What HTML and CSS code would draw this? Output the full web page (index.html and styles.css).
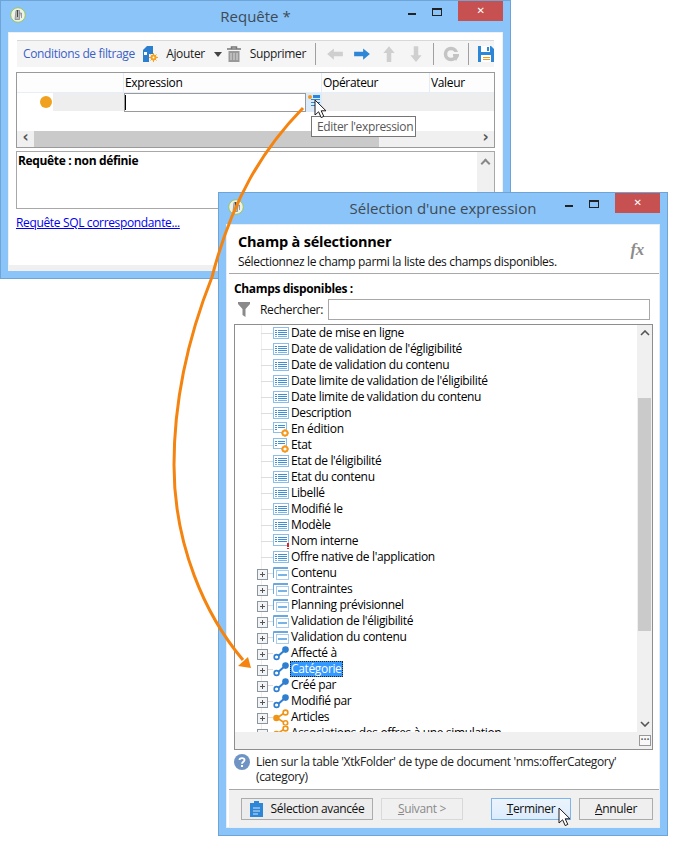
FILE: index.html
```html
<!DOCTYPE html>
<html lang="fr">
<head>
<meta charset="utf-8">
<title>Requête</title>
<link rel="stylesheet" href="styles.css">
</head>
<body>
<svg class="defs" width="0" height="0">
  <symbol id="field" viewBox="0 0 16 16"><rect x="0.5" y="2.5" width="15" height="11" fill="#fff" stroke="#8cbfe8"/><rect x="2" y="5" width="2" height="1" fill="#3f8fd8"/><rect x="5" y="5" width="9" height="1" fill="#3f8fd8"/><rect x="2" y="7" width="2" height="1" fill="#3f8fd8"/><rect x="5" y="7" width="9" height="1" fill="#3f8fd8"/><rect x="2" y="9" width="2" height="1" fill="#3f8fd8"/><rect x="5" y="9" width="9" height="1" fill="#3f8fd8"/><rect x="2" y="11" width="2" height="1" fill="#7ab4e6"/><rect x="5" y="11" width="9" height="1" fill="#7ab4e6"/></symbol>
  <symbol id="calc" viewBox="0 0 16 16"><rect x="0.5" y="1.5" width="13" height="10" fill="#fff" stroke="#8cbfe8"/><rect x="2" y="4" width="2" height="1" fill="#3f8fd8"/><rect x="5" y="4" width="7" height="1" fill="#3f8fd8"/><rect x="2" y="6" width="2" height="1" fill="#3f8fd8"/><rect x="5" y="6" width="7" height="1" fill="#3f8fd8"/><rect x="2" y="8" width="2" height="1" fill="#3f8fd8"/><circle cx="12" cy="12" r="2.6" fill="#fff" stroke="#f39a1e" stroke-width="2"/><path d="M12 8v1M12 15v1M8 12h1M15 12h1" stroke="#f39a1e"/></symbol>
  <symbol id="req" viewBox="0 0 16 16"><rect x="0.5" y="1.5" width="15" height="11" fill="#fff" stroke="#8cbfe8"/><rect x="2" y="4" width="2" height="1" fill="#3f8fd8"/><rect x="5" y="4" width="9" height="1" fill="#3f8fd8"/><rect x="2" y="6" width="2" height="1" fill="#3f8fd8"/><rect x="5" y="6" width="9" height="1" fill="#3f8fd8"/><rect x="2" y="8" width="2" height="1" fill="#3f8fd8"/><rect x="5" y="8" width="9" height="1" fill="#3f8fd8"/><rect x="14" y="10" width="2" height="4" fill="#e0262c"/><rect x="14" y="15" width="2" height="1" fill="#e0262c"/></symbol>
  <symbol id="group" viewBox="0 0 16 16"><path d="M0.5 13V2.5H15" fill="none" stroke="#6aa9e0" stroke-width="1"/><rect x="1" y="2" width="14" height="2" fill="#6aa9e0"/><rect x="3.5" y="5.5" width="12" height="9" fill="#fff" stroke="#a9cdee"/><rect x="5" y="9" width="9" height="2" fill="#7ab4e6"/></symbol>
  <symbol id="link" viewBox="0 0 16 16"><path d="M4 12L12 5" stroke="#2f7fd0" stroke-width="2"/><circle cx="3.6" cy="12" r="2.4" fill="#fff" stroke="#2f7fd0" stroke-width="1.6"/><circle cx="12.5" cy="4.6" r="3.3" fill="#2f7fd0"/></symbol>
  <symbol id="share" viewBox="0 0 16 16"><path d="M4 9L12 3.5M4 9L12 14" stroke="#f09418" stroke-width="1.6"/><circle cx="3.4" cy="9" r="3.2" fill="#f09418"/><circle cx="12.5" cy="3.5" r="2.4" fill="#fff" stroke="#f09418" stroke-width="1.6"/><circle cx="12.5" cy="14" r="2.2" fill="#fff" stroke="#f09418" stroke-width="1.6"/></symbol>
  <symbol id="logo" viewBox="0 0 16 16"><circle cx="8" cy="8" r="7.3" fill="#eef3ea" stroke="#9dc45a" stroke-width="1"/><path d="M6 3.5h3.5v9H5zM9.5 6h2v5" fill="#b9bcbc" stroke="#7c7f80" stroke-width="0.7"/><path d="M7.5 3v7" stroke="#444" stroke-width="1"/></symbol>
  <symbol id="cursor" viewBox="0 0 13 20"><path d="M1 1V16L4.6 12.8L7.2 18.6L9.8 17.4L7.2 11.8H12Z" fill="#fff" stroke="#1c1c1c" stroke-width="1" stroke-linejoin="round"/></symbol>
  <symbol id="arrow" viewBox="0 0 16 16"><path d="M1 8L7 3V6H15V10H7V13Z" fill="currentColor"/></symbol>
</svg>

<section class="win win-query">
  <header class="titlebar">
    <svg class="logo"><use href="#logo"/></svg>
    <h1 class="wintitle">Requête *</h1>
    <div class="winbtns">
      <span class="wb-min"></span><span class="wb-max"></span><span class="wb-close">✕</span>
    </div>
  </header>
  <div class="body body-query">
    <div class="toolbar">
      <span class="tb-title">Conditions de filtrage</span>
      <span class="tb-item tb-add">
        <svg class="i16" viewBox="0 0 16 16"><path d="M1 16V4L5 0H11V8H7V16Z" fill="#2c7fce"/><rect x="2" y="6" width="3" height="3" fill="#fff"/><circle cx="11.5" cy="11.5" r="3" fill="#f7a11e"/><path d="M11.5 7v9M7 11.5h9M8.5 8.5l6 6M14.5 8.5l-6 6" stroke="#f7a11e"/><circle cx="11.5" cy="11.5" r="1" fill="#fff"/></svg>
        Ajouter
      </span>
      <span class="tb-caret"></span>
      <span class="tb-item tb-del">
        <svg class="i16" viewBox="0 0 16 16"><path d="M1 3H15M5.500 3V1H10.500V3" fill="none" stroke="#777" stroke-width="1.500"/><path d="M2.500 5H13.500V16H2.500Z" fill="#999"/><path d="M5 7V14M8 7V14M11 7V14" stroke="#ddd"/></svg>
        Supprimer
      </span>
      <span class="tb-sep tb-sep-a"></span>
      <svg class="i18 off nav-l" viewBox="0 0 16 16"><use href="#arrow"/></svg>
      <svg class="i18 blue nav" viewBox="0 0 16 16"><g transform="rotate(180 8 8)"><use href="#arrow"/></g></svg>
      <svg class="i18 off nav" viewBox="0 0 16 16"><g transform="rotate(90 8 8)"><use href="#arrow"/></g></svg>
      <svg class="i18 off nav" viewBox="0 0 16 16"><g transform="rotate(-90 8 8)"><use href="#arrow"/></g></svg>
      <span class="tb-sep tb-sep-b"></span>
      <svg class="i16 gear" viewBox="0 0 16 16"><circle cx="8" cy="8" r="5.500" fill="none" stroke="#c4c4c4" stroke-width="3.500"/><path d="M10 8h6v2l-3 5-3-5z" fill="#c4c4c4"/><rect x="9" y="6" width="7" height="2" fill="#f5f5f5"/></svg>
      <span class="tb-sep tb-sep-c"></span>
      <svg class="i16 save" viewBox="0 0 16 16"><path d="M0 0H13L16 3V16H0Z" fill="#2e86d6"/><rect x="3" y="0" width="9" height="6" fill="#fff"/><rect x="9" y="1" width="2" height="4" fill="#2e86d6"/><rect x="3" y="9" width="10" height="7" fill="#fff"/><rect x="5" y="11" width="7" height="1" fill="#f39a1e"/><rect x="5" y="13" width="7" height="1" fill="#f39a1e"/></svg>
    </div>

    <div class="grid">
      <div class="grid-head">
        <span class="gh gh-0"></span>
        <span class="gh gh-1">Expression</span>
        <span class="gh gh-2">Opérateur</span>
        <span class="gh gh-3">Valeur</span>
      </div>
      <div class="grid-row">
        <span class="gr-dot"><i class="dot"></i></span>
        <span class="gr-fill"></span>
        <span class="gr-input"><i class="caret"></i></span>
        <span class="gr-btn">
          <svg class="i12" viewBox="0 0 12 12"><circle cx="2" cy="3" r="2" fill="#f39a1e"/><rect x="5" y="1" width="7" height="3" fill="#2e86d6"/><rect x="3" y="5" width="9" height="1" fill="#2e86d6"/><rect x="3" y="8" width="9" height="1" fill="#2e86d6"/><rect x="3" y="11" width="9" height="1" fill="#2e86d6"/></svg>
        </span>
        <span class="gr-rest"></span>
      </div>
      <div class="hscroll">
        <span class="sb-btn">‹</span>
        <span class="sb-thumb"></span>
        <span class="sb-track"></span>
        <span class="sb-btn">›</span>
      </div>
    </div>

    <div class="querybox">
      <strong class="qtext">Requête : non définie</strong>
      <div class="vscroll-small"><span class="sb-up"></span></div>
    </div>
    <a class="sqllink" href="#">Requête SQL correspondante...</a>
  </div>
</section>

<section class="win win-select">
  <header class="titlebar">
    <svg class="logo"><use href="#logo"/></svg>
    <h1 class="wintitle">Sélection d'une expression</h1>
    <div class="winbtns">
      <span class="wb-min"></span><span class="wb-max"></span><span class="wb-close">✕</span>
    </div>
  </header>
  <div class="body body-select">
    <div class="sel-head">
      <div>
        <h2 class="sel-title">Champ à sélectionner</h2>
        <p class="sel-sub">Sélectionnez le champ parmi la liste des champs disponibles.</p>
      </div>
      <span class="fx">fx</span>
    </div>
    <div class="sel-main">
      <div class="avail">Champs disponibles :</div>
      <div class="searchrow">
        <svg class="funnel" viewBox="0 0 12 15"><path d="M0 0H12V2L7.500 7V15L4.500 13V7L0 2Z" fill="#8a8a8a"/></svg>
        <label class="searchlabel">Rechercher:</label>
        <span class="searchbox"></span>
      </div>
      <div class="tree">
        <div class="tree-rows">
          <div class="row"><i class="twig"></i><svg class="ti"><use href="#field"/></svg><span>Date de mise en ligne</span></div>
          <div class="row"><i class="twig"></i><svg class="ti"><use href="#field"/></svg><span>Date de validation de l'égligibilité</span></div>
          <div class="row"><i class="twig"></i><svg class="ti"><use href="#field"/></svg><span>Date de validation du contenu</span></div>
          <div class="row"><i class="twig"></i><svg class="ti"><use href="#field"/></svg><span>Date limite de validation de l'éligibilité</span></div>
          <div class="row"><i class="twig"></i><svg class="ti"><use href="#field"/></svg><span>Date limite de validation du contenu</span></div>
          <div class="row"><i class="twig"></i><svg class="ti"><use href="#field"/></svg><span>Description</span></div>
          <div class="row"><i class="twig"></i><svg class="ti"><use href="#calc"/></svg><span>En édition</span></div>
          <div class="row"><i class="twig"></i><svg class="ti"><use href="#calc"/></svg><span>Etat</span></div>
          <div class="row"><i class="twig"></i><svg class="ti"><use href="#field"/></svg><span>Etat de l'éligibilité</span></div>
          <div class="row"><i class="twig"></i><svg class="ti"><use href="#field"/></svg><span>Etat du contenu</span></div>
          <div class="row"><i class="twig"></i><svg class="ti"><use href="#field"/></svg><span>Libellé</span></div>
          <div class="row"><i class="twig"></i><svg class="ti"><use href="#field"/></svg><span>Modifié le</span></div>
          <div class="row"><i class="twig"></i><svg class="ti"><use href="#field"/></svg><span>Modèle</span></div>
          <div class="row"><i class="twig"></i><svg class="ti"><use href="#req"/></svg><span>Nom interne</span></div>
          <div class="row"><i class="twig"></i><svg class="ti"><use href="#field"/></svg><span>Offre native de l'application</span></div>
          <div class="row"><i class="twig plus"></i><svg class="ti"><use href="#group"/></svg><span>Contenu</span></div>
          <div class="row"><i class="twig plus"></i><svg class="ti"><use href="#group"/></svg><span>Contraintes</span></div>
          <div class="row"><i class="twig plus"></i><svg class="ti"><use href="#group"/></svg><span>Planning prévisionnel</span></div>
          <div class="row"><i class="twig plus"></i><svg class="ti"><use href="#group"/></svg><span>Validation de l'éligibilité</span></div>
          <div class="row"><i class="twig plus"></i><svg class="ti"><use href="#group"/></svg><span>Validation du contenu</span></div>
          <div class="row"><i class="twig plus"></i><svg class="ti"><use href="#link"/></svg><span>Affecté à</span></div>
          <div class="row"><i class="twig plus"></i><svg class="ti"><use href="#link"/></svg><span class="selected">Catégorie</span></div>
          <div class="row"><i class="twig plus"></i><svg class="ti"><use href="#link"/></svg><span>Créé par</span></div>
          <div class="row"><i class="twig plus"></i><svg class="ti"><use href="#link"/></svg><span>Modifié par</span></div>
          <div class="row"><i class="twig plus"></i><svg class="ti"><use href="#share"/></svg><span>Articles</span></div>
          <div class="row"><i class="twig plus"></i><svg class="ti"><use href="#share"/></svg><span>Associations des offres à une simulation</span></div>
        </div>
        <div class="tree-vs">
          <svg class="chev" viewBox="0 0 10 6"><path d="M1 5L5 1L9 5" fill="none" stroke="#555" stroke-width="1.600"/></svg>
          <span class="tv-track"></span>
          <span class="tv-thumb"></span>
          <span class="tv-track2"></span>
          <svg class="chev" viewBox="0 0 10 6"><path d="M1 1L5 5L9 1" fill="none" stroke="#555" stroke-width="1.600"/></svg>
        </div>
        <div class="tree-foot"><span class="more">···</span></div>
      </div>
      <div class="info">
        <svg class="help" viewBox="0 0 16 16"><circle cx="8" cy="8" r="8" fill="#6f94c4"/><path d="M5.500 6C5.500 3.500 10.500 3.500 10.500 6C10.500 7.800 8 7.600 8 9.800" fill="none" stroke="#fff" stroke-width="1.800"/><rect x="7" y="11" width="2" height="2" fill="#fff"/></svg>
        <p class="infotext">Lien sur la table 'XtkFolder' de type de document 'nms:offerCategory' (category)</p>
      </div>
    </div>
    <footer class="sel-foot">
      <button class="btn btn-adv" type="button">
        <svg class="clip" viewBox="0 0 13 16"><path d="M0 2H4V0H9V2H13V16H0Z" fill="#2e86d6"/><path d="M3 7H10M3 10H10M3 13H8" stroke="#cfe4f7"/></svg>
        Sélection avancée
      </button>
      <button class="btn btn-next" type="button"><u>S</u>uivant &gt;</button>
      <button class="btn btn-end" type="button"><u>T</u>erminer</button>
      <button class="btn btn-cancel" type="button"><u>A</u>nnuler</button>
    </footer>
  </div>
</section>

<div class="tooltip">Editer l'expression</div>

<svg class="overlay" viewBox="0 0 682 855">
  <path d="M303 108C262 150 232 200 212 277C185 345 174 410 174 465C174 545 205 615 243 660" fill="none" stroke="#f5830f" stroke-width="3"/>
  <path d="M238 666L248 657L251 668Z" fill="#f5830f"/>
</svg>
<svg class="cur cur-a"><use href="#cursor"/></svg>
<svg class="cur cur-b"><use href="#cursor"/></svg>
</body>
</html>
```
FILE: styles.css
```css
* { box-sizing: border-box; }
html, body { margin: 0; padding: 0; background: #fff; }
body {
  position: relative;
  width: 682px;
  height: 855px;
  overflow: hidden;
  font: 12px/16px "Open Sans", "Noto Sans", sans-serif;
  letter-spacing: -0.35px;
  color: #111;
}
.defs { position: absolute; }

/* windows on the canvas */
.win {
  position: absolute;
  background: #8ac4f8;
  border: 1px solid #6ea4d6;
  display: flex;
  flex-direction: column;
}
.win-query { left: 0; top: 0; width: 511px; height: 279px; }
.win-select { left: 218px; top: 192px; width: 450px; height: 644px; }

.titlebar { position: relative; height: 31px; flex: none; display: flex; justify-content: center; }
.logo { position: absolute; left: 9px; top: 6px; width: 16px; height: 16px; }
.wintitle { margin: 0; font-size: 15px; font-weight: 400; line-height: 30px; color: #3f4a55; letter-spacing: 0; }
.winbtns { position: absolute; right: 7px; top: 0; display: flex; align-items: flex-start; }
.wb-min { width: 8px; height: 2px; background: #222; margin: 12px 16px 0 0; }
.wb-max { width: 10px; height: 8px; border: 1px solid #222; border-top-width: 2px; margin: 7px 16px 0 0; }
.wb-close { width: 45px; height: 20px; background: #c75050; color: #fff; text-align: center; font: 700 10px/19px "DejaVu Sans", sans-serif; }

.body { margin: 0 7px 7px; flex: 1; background: #fff; border: 1px solid #eef2f6; display: flex; flex-direction: column; min-height: 0; }
.body-query { padding: 7px 8px 0 8px; border-color: #f0f0f0; border-width: 1px 1px 6px 1px; }

/* query toolbar */
.toolbar { height: 27px; flex: none; display: flex; align-items: center; background: #f5f5f5; border-top: 1px solid #d8d8d8; padding-left: 6px; color: #1c1c1c; }
.tb-title { color: #3a5fc8; width: 125px; }
.tb-item { display: flex; align-items: center; gap: 8px; }
.tb-del { margin-left: 4px; }
.tb-caret { width: 0; height: 0; border: 4px solid transparent; border-top: 5px solid #444; border-bottom: 0; margin-left: 9px; }
.tb-sep { width: 1px; height: 22px; background: #a0a0a0; flex: none; }
.tb-sep-a { margin: 0 9px 0 9px; }
.tb-sep-b { margin: 0 9px 0 8px; }
.tb-sep-c { margin: 0 9px 0 9px; }
.i16 { width: 16px; height: 16px; flex: none; display: block; }
.i18 { width: 18px; height: 18px; flex: none; display: block; }
.i12 { width: 12px; height: 12px; display: block; }
.off { color: #cfcfcf; }
.blue { color: #2e86d6; }
.nav { margin-left: 9px; }
.nav-l { margin-left: 1px; }

/* grid */
.grid { margin-top: 5px; height: 76px; flex: none; border: 1px solid #9a9a9a; border-left-width: 1px; display: flex; flex-direction: column; margin-right: -1px; margin-left: -1px; color: #000; }
.grid-head { height: 20px; display: flex; flex: none; background: #fdfdfd; border-bottom: 1px solid #e6eff8; }
.gh { border-right: 1px solid #e3edf7; line-height: 20px; padding-left: 1px; }
.gh-0 { width: 107px; }
.gh-1 { width: 198px; }
.gh-2 { width: 108px; }
.gh-3 { flex: 1; border-right: 0; }
.grid-row { height: 18px; display: flex; flex: none; }
.gr-dot { width: 36px; display: flex; align-items: center; justify-content: flex-end; padding-right: 1px; }
.dot { width: 12px; height: 12px; border-radius: 50%; background: #f0a11f; }
.gr-fill { width: 71px; background: #eee; }
.gr-input { width: 182px; height: 19px; background: #fff; border: 1px solid #9a9a9a; padding: 1px 0 0 0; }
.caret { display: block; width: 1px; height: 15px; background: #000; }
.gr-btn { width: 16px; height: 19px; background: #dcebfa; display: flex; justify-content: center; padding-top: 1px; }
.gr-rest { flex: 1; background: #eee; }
.hscroll { margin-top: auto; height: 16px; display: flex; background: #f0f0f0; flex: none; }
.sb-btn { width: 17px; text-align: center; font: 700 15px/13px "DejaVu Sans", sans-serif; color: #555; flex: none; }
.sb-thumb { width: 345px; background: #cacaca; }
.sb-track { flex: 1; }

/* query box */
.querybox { margin: 3px -1px 0; height: 58px; flex: none; border: 1px solid #a8a8a8; display: flex; justify-content: space-between; }
.qtext { font-weight: 700; padding: 1px 0 0 1px; color: #000; }
.vscroll-small { width: 17px; background: #f0f0f0; display: flex; justify-content: center; padding-top: 6px; }
.sb-up { width: 7px; height: 7px; border-left: 2px solid #888; border-top: 2px solid #888; transform: rotate(45deg); margin-top: 2px; }
.sqllink { margin: 6px 0 0 -1px; color: #0000ee; text-decoration: underline; align-self: flex-start; }

/* selection window */
.body-select { border-color: #e6eef6; }
.sel-head { height: 49px; flex: none; display: flex; justify-content: space-between; padding: 7px 15px 0 9px; margin-left: 0; border-bottom: 1px solid #a8a8a8; margin: 0 0 0 2px; }
.sel-title { margin: 0; font-size: 14.500px; line-height: 20px; font-weight: 700; color: #000; letter-spacing: -0.2px; }
.sel-sub { margin: 2px 0 0; color: #111; }
.fx { font: italic 700 17px/20px "Liberation Serif", serif; color: #8c8c8c; margin-top: 8px; margin-right: 0; }
.sel-main { height: 515px; flex: none; padding: 7px 6px 0 7px; }
.avail { font-weight: 700; height: 16px; line-height: 16px; color: #000; }
.searchrow { display: flex; align-items: center; margin-top: 2px; height: 21px; }
.funnel { width: 12px; height: 15px; margin-left: 4px; flex: none; }
.searchlabel { margin-left: 10px; width: 68px; flex: none; }
.searchbox { flex: 1; height: 21px; border: 1px solid #a8a8a8; background: #fff; margin-right: 3px; }
.tree { position: relative; margin-top: 4px; height: 426px; border: 1px solid #8e8e8e; border-left-width: 1px; }
.tree-rows { height: 407px; overflow: hidden; padding: 0 16px 0 22px; }
.row { height: 16px; display: flex; align-items: center; white-space: nowrap; color: #000; }
.twig {
  width: 16px; height: 16px; flex: none; position: relative;
  background: linear-gradient(#ddd, #ddd) 4px 8px / 12px 1px no-repeat, linear-gradient(#eee, #eee) 4px 0 / 1px 16px no-repeat;
}
.twig.plus::before {
  content: ""; position: absolute; left: 0; top: 4px; width: 9px; height: 9px;
  border: 1px solid #8c96a0; background: linear-gradient(#555, #555) center / 5px 1px no-repeat, linear-gradient(#555, #555) center / 1px 5px no-repeat, #f2f4f6;
}
.ti { width: 16px; height: 16px; flex: none; margin-right: 2px; }
.selected { background: #3399ff; color: #fff; outline: 1px dotted #222; outline-offset: -1px; padding: 0 1px; margin-left: -1px; height: 16px; }
.tree-vs { position: absolute; right: 0; top: 0; width: 15px; height: 407px; background: #f0f0f0; display: flex; flex-direction: column; }
.chev { width: 10px; height: 6px; margin: 5px auto; flex: none; }
.tv-track { height: 57px; flex: none; }
.tv-thumb { height: 233px; flex: none; background: #cacaca; margin: 0 1px; }
.tv-track2 { flex: 1; }
.tree-foot { position: absolute; left: 0; right: 0; bottom: 0; height: 17px; background: #f0f0f0; display: flex; justify-content: flex-end; align-items: center; padding-right: 1px; }
.more { width: 12px; height: 11px; border: 1px solid #999; background: #f8f8f8; font: 700 8px/7px "DejaVu Sans", sans-serif; text-align: center; color: #555; letter-spacing: 0; }
.info { display: flex; margin-top: 3px; gap: 6px; }
.help { width: 16px; height: 16px; flex: none; margin-top: 1px; }
.infotext { margin: 1px 0 0; width: 384px; line-height: 15px; color: #222; }
.sel-foot { flex: 1; background: #f0f0f0; border-top: 1px solid #a8a8a8; margin: 0 0 0 2px; display: flex; align-items: flex-start; padding: 8px 0 0 12px; }
.btn { height: 22px; padding: 0; font: inherit; letter-spacing: inherit; background: #efefef; border: 1px solid #acacac; color: #111; display: flex; align-items: center; justify-content: center; }
.btn-adv { width: 132px; gap: 8px; margin-right: 8px; background: #ececec; }
.clip { width: 13px; height: 16px; }
.btn-next { width: 82px; color: #8a8a8a; border-color: #d9d9d9; background: #f0f0f0; margin-right: 28px; }
.btn-end { width: 80px; border-color: #7eb4ea; background: linear-gradient(#ecf4fc, #dcecfc); margin-right: 8px; }
.btn-cancel { width: 74px; }

/* over everything */
.tooltip { position: absolute; left: 311px; top: 116px; width: 105px; height: 21px; background: #fff; border: 1px solid #767676; color: #575757; line-height: 19px; padding-left: 5px; }
.overlay { position: absolute; left: 0; top: 0; width: 682px; height: 855px; pointer-events: none; }
.cur { position: absolute; width: 13px; height: 20px; }
.cur-a { left: 314px; top: 99px; }
.cur-b { left: 558px; top: 807px; }
```
